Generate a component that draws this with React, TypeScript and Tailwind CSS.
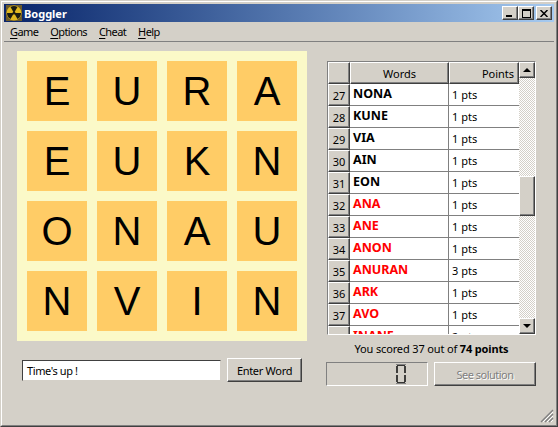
import React from 'react';

const ui = { fontFamily: '"Noto Sans", "Liberation Sans", sans-serif' };

const raised =
  'border border-t-white border-l-white border-r-[#404040] border-b-[#404040] shadow-[inset_-1px_-1px_0_#808080]';

const board = ['EURA', 'EUKN', 'ONAU', 'NVIN'];

const words: [number, string, number, boolean][] = [
  [27, 'NONA', 1, false],
  [28, 'KUNE', 1, false],
  [29, 'VIA', 1, false],
  [30, 'AIN', 1, false],
  [31, 'EON', 1, false],
  [32, 'ANA', 1, true],
  [33, 'ANE', 1, true],
  [34, 'ANON', 1, true],
  [35, 'ANURAN', 3, true],
  [36, 'ARK', 1, true],
  [37, 'AVO', 1, true],
  [38, 'INANE', 2, true],
];

const Mnemonic: React.FC<{ label: string }> = ({ label }) => (
  <span>
    <span className="underline underline-offset-2">{label[0]}</span>
    {label.slice(1)}
  </span>
);

const RadiationIcon = () => (
  <svg width="16" height="16" viewBox="0 0 16 16" className="shrink-0">
    <rect width="16" height="16" fill="#6b5a2a" />
    <circle cx="8" cy="8" r="7.5" fill="#e0b820" />
    <path d="M8 8 L4.5 2 A7 7 0 0 1 11.5 2 Z" fill="#1c1c10" />
    <path d="M8 8 L15 8 A7 7 0 0 1 11.5 14 Z" fill="#1c1c10" />
    <path d="M8 8 L4.5 14 A7 7 0 0 1 1 8 Z" fill="#1c1c10" />
    <circle cx="8" cy="8" r="1.5" fill="#1c1c10" />
  </svg>
);

const CaptionButton: React.FC<{ children: React.ReactNode; className?: string }> = ({ children, className }) => (
  <div className={`flex h-[14px] w-4 items-center justify-center bg-[#d4d0c8] ${raised} ${className ?? ''}`}>
    {children}
  </div>
);

const App: React.FC = () => {
  return (
    <div
      className="relative h-[427px] w-[558px] overflow-hidden border border-t-[#d4d0c8] border-l-[#d4d0c8] border-r-[#404040] border-b-[#404040] bg-[#d4d0c8] text-[11px] leading-none text-black"
      style={ui}
    >
      <div className="flex h-full flex-col border border-t-white border-l-white border-r-[#808080] border-b-[#808080] p-[2px]">
        {/* Title bar */}
        <div className="flex h-[18px] shrink-0 items-center bg-gradient-to-r from-[#0a246a] to-[#a6caf0] pl-[2px] pr-[2px]">
          <RadiationIcon />
          <span className="ml-[2px] text-[11px] font-bold text-white">Boggler</span>
          <div className="ml-auto flex items-center">
            <CaptionButton>
              <div className="mt-[6px] mr-[2px] h-[2px] w-[6px] bg-black" />
            </CaptionButton>
            <CaptionButton>
              <div className="h-[9px] w-[9px] border border-t-2 border-black" />
            </CaptionButton>
            <CaptionButton className="ml-[2px]">
              <svg width="8" height="7" viewBox="0 0 8 7">
                <path d="M0.5 0 L7.5 7 M7.5 0 L0.5 7" stroke="#000" strokeWidth="1.5" />
              </svg>
            </CaptionButton>
          </div>
        </div>

        {/* Menu */}
        <div className="flex h-[20px] shrink-0 items-center gap-[12px] border-b border-[#808080] pl-[6px] text-[11px] tracking-[-0.6px]">
          <Mnemonic label="Game" />
          <Mnemonic label="Options" />
          <Mnemonic label="Cheat" />
          <Mnemonic label="Help" />
        </div>

        {/* Body */}
        <div className="flex gap-[20px] pl-[13px] pt-[9px]">
          <div className="flex w-[290px] shrink-0 flex-col">
            <div className="grid h-[290px] grid-cols-4 gap-[10px] bg-[#fbf9c8] p-[10px]">
              {board.join('').split('').map((letter, i) => (
                <div
                  key={i}
                  className="flex items-center justify-center bg-[#ffcc66] text-[40px] text-black"
                  style={{ fontFamily: '"Liberation Sans", sans-serif' }}
                >
                  {letter}
                </div>
              ))}
            </div>
            <div className="mt-[17px] flex items-center pl-[5px]">
              <div className="flex h-[21px] w-[199px] items-center border border-t-[#404040] border-l-[#404040] border-r-[#d4d0c8] border-b-[#d4d0c8] bg-white pl-[4px] tracking-[-0.4px]">
                Time's up !
              </div>
              <div className={`ml-[6px] flex h-[24px] w-[75px] items-center justify-center bg-[#d4d0c8] tracking-[-0.3px] ${raised}`}>
                Enter Word
              </div>
            </div>
          </div>

          <div className="mt-[10px] flex w-[209px] shrink-0 flex-col">
            {/* Table */}
            <div className="flex h-[274px] border border-t-[#808080] border-l-[#808080] border-r-white border-b-white">
              <div className="min-w-0 flex-1 overflow-hidden bg-white">
                <div className="flex h-[22px] bg-[#d4d0c8]">
                  <div className={`h-full w-[22px] shrink-0 ${raised}`} />
                  <div className={`flex h-full w-[99px] shrink-0 items-center justify-center ${raised}`}>Words</div>
                  <div className={`flex h-full flex-1 items-center justify-center pl-[28px] ${raised}`}>Points</div>
                </div>
                {words.map(([n, word, pts, red]) => (
                  <div key={n} className="flex h-[22px]">
                    <div className={`flex h-full w-[22px] shrink-0 items-center justify-center bg-[#d4d0c8] ${raised}`}>
                      {n}
                    </div>
                    <div
                      className={`flex h-full w-[99px] shrink-0 items-center border-r border-b border-[#808080] pl-[3px] text-[12.5px] font-bold ${red ? 'text-[#ff0000]' : 'text-black'}`}
                    >
                      {word}
                    </div>
                    <div className="flex h-full flex-1 items-center border-b border-[#808080] pl-[3px]">{pts} pts</div>
                  </div>
                ))}
              </div>
              {/* Scrollbar */}
              <div className="flex w-[16px] shrink-0 flex-col bg-[repeating-conic-gradient(#d4d0c8_0_25%,#fff_0_50%)] bg-[length:2px_2px]">
                <div className={`flex h-[16px] shrink-0 items-center justify-center bg-[#d4d0c8] ${raised}`}>
                  <div className="h-0 w-0 border-x-[4px] border-b-[4px] border-x-transparent border-b-black" />
                </div>
                <div className={`mt-[98px] h-[40px] shrink-0 bg-[#d4d0c8] ${raised}`} />
                <div className={`mt-auto flex h-[16px] shrink-0 items-center justify-center bg-[#d4d0c8] ${raised}`}>
                  <div className="h-0 w-0 border-x-[4px] border-t-[4px] border-x-transparent border-t-black" />
                </div>
              </div>
            </div>

            <div className="mt-[8px] text-center tracking-[-0.15px]">
              You scored 37 out of <span className="font-bold">74 points</span>
            </div>

            <div className="mt-[8px] flex gap-[6px] -ml-[1px]">
              <div className="flex h-[24px] w-[102px] items-center justify-end border border-t-[#808080] border-l-[#808080] border-r-white border-b-white pr-[21px]">
                <svg width="10" height="20" viewBox="0 0 10 20">
                  <path d="M1 1h8M1 19h8M1 2v7M9 2v7M1 11v7M9 11v7" stroke="#000" strokeWidth="1.4" />
                  <path d="M0 0h10M0 20h10" stroke="#808080" strokeWidth="2" />
                </svg>
              </div>
              <div
                className={`flex h-[24px] w-[102px] items-center justify-center bg-[#d4d0c8] tracking-[-0.5px] text-[#808080] [text-shadow:1px_1px_0_#fff] ${raised}`}
              >
                See solution
              </div>
            </div>
          </div>
        </div>
      </div>

      {/* Size grip */}
      <svg width="14" height="14" viewBox="0 0 14 14" className="absolute bottom-[3px] right-[3px]">
        <path d="M13 1 L1 13 M13 5 L5 13 M13 9 L9 13" stroke="#808080" strokeWidth="1.4" />
        <path d="M13 3 L3 13 M13 7 L7 13 M13 11 L11 13" stroke="#fff" strokeWidth="1" />
      </svg>
    </div>
  );
};

export default App;
